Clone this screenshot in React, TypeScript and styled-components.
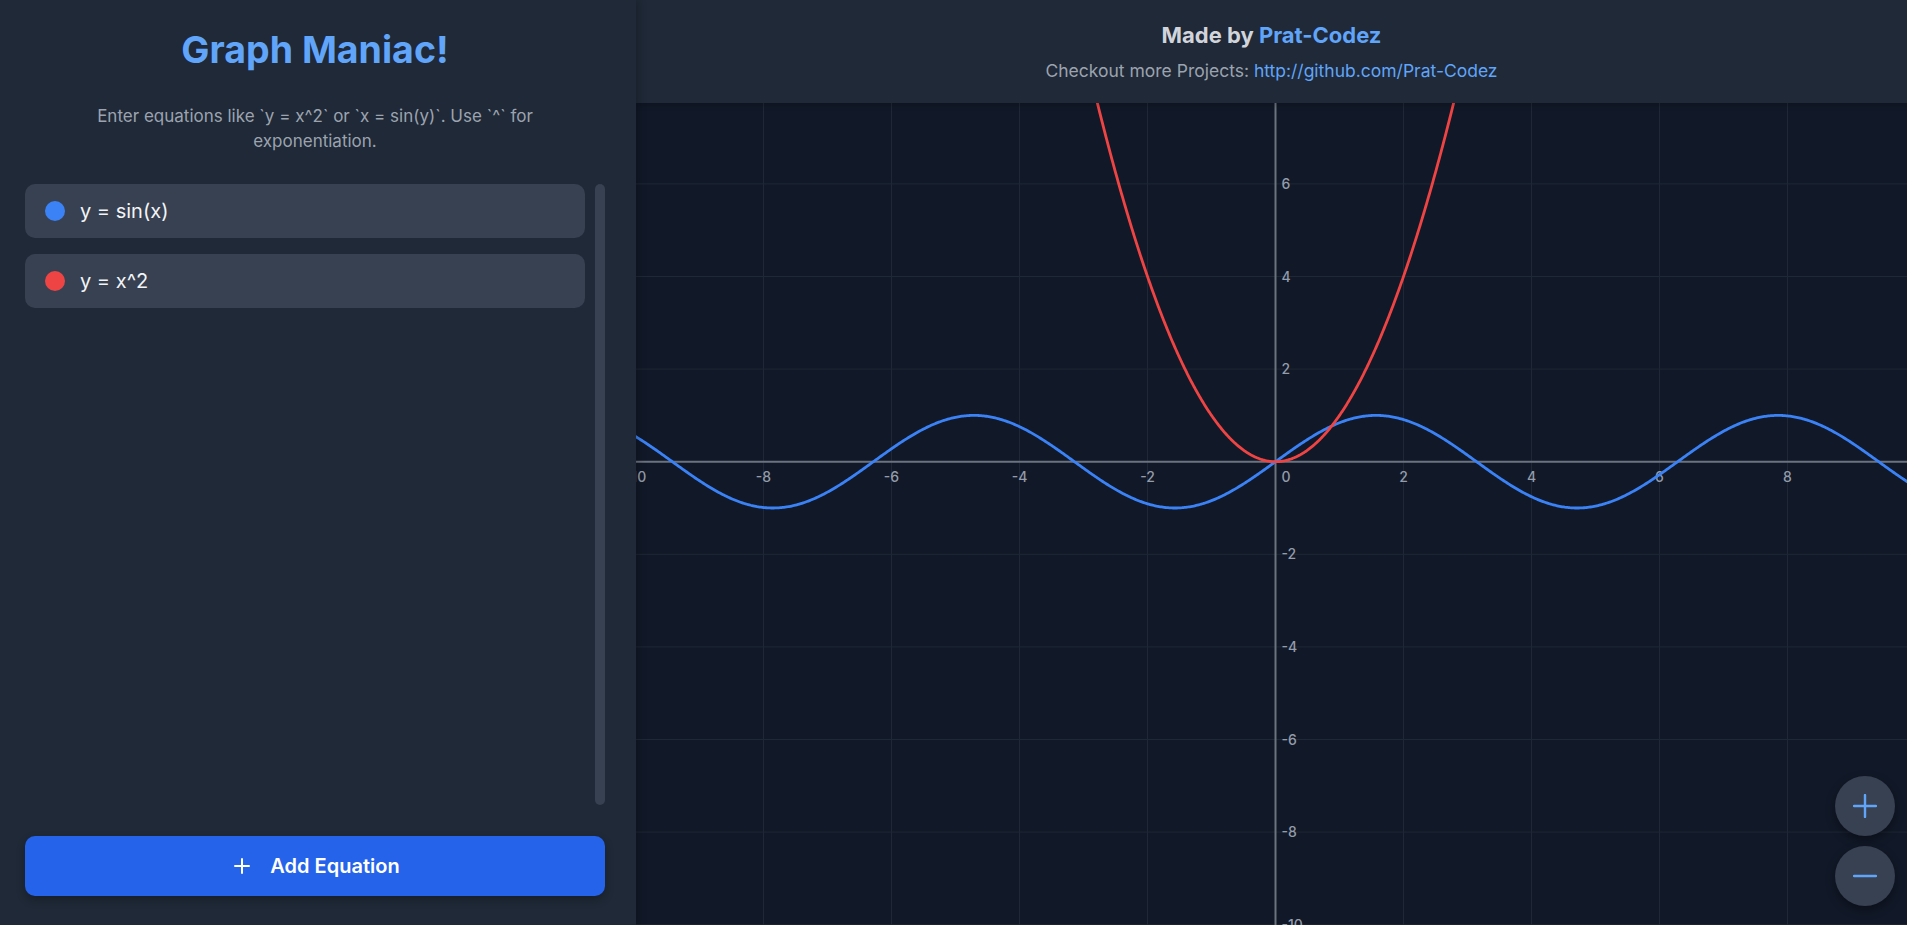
import React from "react";
import styled, { createGlobalStyle } from "styled-components";
import { Plus } from "lucide-react";

const GlobalStyle = createGlobalStyle`
  html, body, #root { margin: 0; padding: 0; height: 100%; }
  body {
    background: #111827;
    font-family: Inter, "Noto Sans", "Liberation Sans", sans-serif;
    overflow: hidden;
  }
  * { box-sizing: border-box; }
`;

const Shell = styled.div`
  display: flex;
  width: 100%;
  height: 100vh;
`;

const Sidebar = styled.aside`
  width: 636px;
  flex-shrink: 0;
  display: flex;
  flex-direction: column;
  padding: 30px 31px 29px 25px;
  background: #1f2937;
  box-shadow: 2px 0 8px rgba(0, 0, 0, 0.25);
  position: relative;
  z-index: 2;
`;

const Title = styled.h1`
  margin: 0;
  font-size: 37.5px;
  line-height: 40px;
  font-weight: 700;
  color: #60a5fa;
  text-align: center;
`;

const Hint = styled.p`
  margin: 34px 0 0;
  padding: 0 20px;
  font-size: 17px;
  line-height: 25px;
  color: #9ca3af;
  text-align: center;
`;

const ListArea = styled.div`
  flex: 1;
  min-height: 0;
  margin-top: 30px;
  display: flex;
  gap: 10px;
`;

const EquationList = styled.ul`
  flex: 1;
  list-style: none;
  margin: 0;
  padding: 0;
  display: flex;
  flex-direction: column;
  gap: 16px;
`;

const EquationCard = styled.li`
  height: 54px;
  display: flex;
  align-items: center;
  gap: 15px;
  padding: 0 20px;
  background: #374151;
  border-radius: 10px;
`;

const Swatch = styled.span<{ $color: string }>`
  width: 20px;
  height: 20px;
  border-radius: 50%;
  background: ${(p) => p.$color};
  flex-shrink: 0;
`;

const EquationText = styled.span`
  font-size: 20px;
  line-height: 28px;
  color: #f3f4f6;
`;

const ScrollTrack = styled.div`
  width: 10px;
  flex-shrink: 0;
  border-radius: 5px;
  background: #374151;
`;

const AddButton = styled.button`
  margin-top: 31px;
  height: 60px;
  width: 100%;
  flex-shrink: 0;
  border: none;
  border-radius: 10px;
  background: #2563eb;
  color: #ffffff;
  display: flex;
  align-items: center;
  justify-content: center;
  gap: 16px;
  font-family: inherit;
  font-size: 20px;
  font-weight: 600;
  box-shadow: 0 4px 8px rgba(0, 0, 0, 0.25);
  cursor: pointer;
`;

const GraphPane = styled.main`
  flex: 1;
  min-width: 0;
  display: flex;
  flex-direction: column;
  position: relative;
  background: #111827;
`;

const Header = styled.header`
  height: 103px;
  flex-shrink: 0;
  background: #1f2937;
  padding-top: 21px;
  text-align: center;
  position: relative;
  z-index: 1;
  box-shadow: 0 2px 6px rgba(0, 0, 0, 0.2);
`;

const Credit = styled.div`
  font-size: 22px;
  line-height: 28px;
  font-weight: 700;
  color: #d1d5db;
`;

const Accent = styled.span`
  color: #60a5fa;
`;

const SubCredit = styled.div`
  margin-top: 10px;
  font-size: 17.5px;
  line-height: 24px;
  color: #9ca3af;
`;

const RepoLink = styled.a`
  color: #60a5fa;
  text-decoration: none;
`;

const Plot = styled.svg`
  flex: 1;
  display: block;
  width: 100%;
  min-height: 0;
`;

const ZoomControls = styled.div`
  position: absolute;
  right: 12px;
  bottom: 19px;
  display: flex;
  flex-direction: column;
  gap: 10px;
`;

const ZoomButton = styled.button`
  width: 60px;
  height: 60px;
  border-radius: 50%;
  border: none;
  padding: 0;
  background: #374151;
  display: flex;
  align-items: center;
  justify-content: center;
  box-shadow: 0 4px 10px rgba(0, 0, 0, 0.35);
  cursor: pointer;
`;

const W = 1271;
const H = 822;
const OX = 639.5;
const OY = 358.7;
const SX = 64;
const SY = 46.3;

const px = (x: number) => OX + x * SX;
const py = (y: number) => OY - y * SY;

function buildPath(f: (x: number) => number, from: number, to: number, step: number) {
  let d = "";
  for (let x = from; x <= to + 1e-9; x += step) {
    const X = px(x);
    const Y = py(f(x));
    d += (d ? "L" : "M") + X.toFixed(2) + " " + Y.toFixed(2) + " ";
  }
  return d;
}

const equations = [
  { id: 1, text: "y = sin(x)", color: "#3b82f6" },
  { id: 2, text: "y = x^2", color: "#ef4444" },
];

const xTicks = [-10, -8, -6, -4, -2, 2, 4, 6, 8];
const yTicks = [-10, -8, -6, -4, -2, 2, 4, 6];
const gridX = [-10, -8, -6, -4, -2, 2, 4, 6, 8];
const gridY = [-10, -8, -6, -4, -2, 2, 4, 6, 8];

function Graph() {
  const sinPath = buildPath(Math.sin, -10.2, 10, 0.02);
  const sqPath = buildPath((x) => x * x, -3, 3, 0.01);
  const labelStyle = {
    fontFamily: "Inter, 'Noto Sans', sans-serif",
    fontSize: 14,
    fontWeight: 500,
    fill: "#939cab",
  } as const;
  return (
    <Plot viewBox={`0 0 ${W} ${H}`} preserveAspectRatio="none">
      <rect x={0} y={0} width={W} height={H} fill="#111827" />
      {gridX.map((x) => (
        <line key={"gx" + x} x1={px(x)} x2={px(x)} y1={0} y2={H} stroke="#1f2836" strokeWidth={1} />
      ))}
      {gridY.map((y) => (
        <line key={"gy" + y} x1={0} x2={W} y1={py(y)} y2={py(y)} stroke="#1f2836" strokeWidth={1} />
      ))}
      <line x1={0} x2={W} y1={OY} y2={OY} stroke="#6b7280" strokeWidth={2} />
      <line x1={OX} x2={OX} y1={0} y2={H} stroke="#6b7280" strokeWidth={2} />
      {xTicks.map((x) => (
        <text key={"lx" + x} x={px(x)} y={OY + 19.8} textAnchor="middle" style={labelStyle}>
          {x}
        </text>
      ))}
      <text x={OX + 6} y={OY + 19.8} textAnchor="start" style={labelStyle}>
        0
      </text>
      {yTicks.map((y) => (
        <text key={"ly" + y} x={OX + 6} y={py(y) + 5} textAnchor="start" style={labelStyle}>
          {y}
        </text>
      ))}
      <path d={sinPath} fill="none" stroke="#3b82f6" strokeWidth={2.8} strokeLinejoin="round" />
      <path d={sqPath} fill="none" stroke="#ef4444" strokeWidth={2.8} strokeLinejoin="round" />
    </Plot>
  );
}

export default function App() {
  return (
    <>
      <GlobalStyle />
      <Shell>
        <Sidebar>
          <Title>Graph Maniac!</Title>
          <Hint>
            Enter equations like `y = x^2` or `x = sin(y)`. Use `^` for exponentiation.
          </Hint>
          <ListArea>
            <EquationList>
              {equations.map((eq) => (
                <EquationCard key={eq.id}>
                  <Swatch $color={eq.color} />
                  <EquationText>{eq.text}</EquationText>
                </EquationCard>
              ))}
            </EquationList>
            <ScrollTrack />
          </ListArea>
          <AddButton>
            <Plus size={24} strokeWidth={2} />
            Add Equation
          </AddButton>
        </Sidebar>
        <GraphPane>
          <Header>
            <Credit>
              Made by <Accent>Prat-Codez</Accent>
            </Credit>
            <SubCredit>
              Checkout more Projects:{" "}
              <RepoLink href="#">http://github.com/Prat-Codez</RepoLink>
            </SubCredit>
          </Header>
          <Graph />
          <ZoomControls>
            <ZoomButton aria-label="Zoom in">
              <svg width="24" height="24" viewBox="0 0 24 24">
                <path d="M1 12h22M12 1v22" stroke="#60a5fa" strokeWidth="2.4" strokeLinecap="round" fill="none" />
              </svg>
            </ZoomButton>
            <ZoomButton aria-label="Zoom out">
              <svg width="24" height="24" viewBox="0 0 24 24">
                <path d="M1 12h22" stroke="#60a5fa" strokeWidth="2.4" strokeLinecap="round" fill="none" />
              </svg>
            </ZoomButton>
          </ZoomControls>
        </GraphPane>
      </Shell>
    </>
  );
}
